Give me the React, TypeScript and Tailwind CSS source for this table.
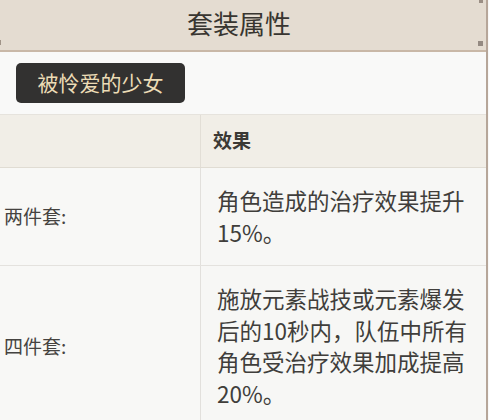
export default function App() {
  const rows = [
    { label: "两件套:", text: "角色造成的治疗效果提升15%。" },
    {
      label: "四件套:",
      text: "施放元素战技或元素爆发后的10秒内，队伍中所有角色受治疗效果加成提高20%。",
    },
  ];

  return (
    <div className="w-[489px] h-[420px] overflow-hidden bg-[#f9f9f8] font-['Noto_Sans_CJK_SC','Noto_Sans',sans-serif]">
      <div className="w-[488px] h-full border-r-2 border-[#b6a699] bg-[#f9f9f8]">
        <div className="relative h-[52px] bg-[#e4dcd1] border-b-2 border-[#c9b8a7] flex items-center justify-center pr-2">
          <h2 className="text-[26px] leading-none text-[#383530] pb-[4px]">套装属性</h2>
          <span className="absolute right-[3px] top-0 w-[4px] h-[3px] bg-[#9a8e84]" />
          <span className="absolute right-[3px] top-[41px] w-[5px] h-[5px] bg-[#948a82]" />
          <span className="absolute left-0 top-[40px] w-[1px] h-[5px] bg-[#a09488]" />
        </div>

        <div className="h-[62px] pt-[11px] pl-[16px] bg-[#f9f9f8]">
          <button className="w-[169px] h-[40px] rounded-[5px] bg-[#323130] text-[#ecdcb6] text-[21px] leading-none pb-[2px]">
            被怜爱的少女
          </button>
        </div>

        <div className="border-t border-[#e6e3dd]">
          <div className="flex h-[53px] bg-[#f1eee7] border-b border-[#e0dcd3]">
            <div className="w-[201px] border-r border-[#e2ded6]" />
            <div className="flex-1 flex items-center pl-[12px] pb-[1px] text-[19px] font-bold text-[#3b3935]">
              效果
            </div>
          </div>

          {rows.map((row) => (
            <div key={row.label} className="flex bg-[#f7f7f5] border-b border-[#e4e2de]">
              <div className="w-[201px] flex items-center pl-[4px] border-r border-[#e2e0dc] bg-[#f8f8f6] text-[19px] text-[#454340]">
                {row.label}
              </div>
              <div className="flex-1 pl-[16px] pr-[16px] py-[17px] text-[22.5px] leading-[31.5px] text-[#403e3b]">
                {row.text}
              </div>
            </div>
          ))}
        </div>
      </div>
    </div>
  );
}
